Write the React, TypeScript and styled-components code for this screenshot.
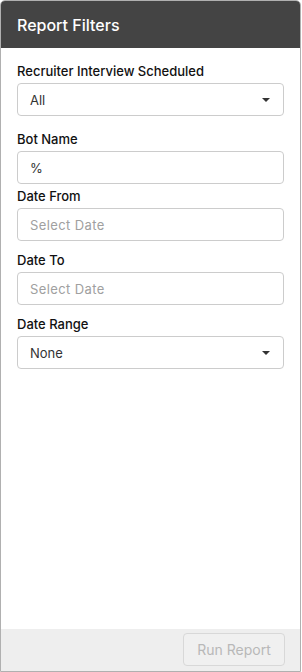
import styled, { createGlobalStyle } from 'styled-components';

const GlobalStyle = createGlobalStyle`
  html, body {
    margin: 0;
    padding: 0;
    background: #ffffff;
  }
  body {
    font-family: Inter, 'Open Sans', sans-serif;
  }
  * {
    box-sizing: border-box;
  }
`;

interface FieldProps {
  $top: number;
}

const Panel = styled.div`
  width: 301px;
  height: 672px;
  display: flex;
  flex-direction: column;
  border: 1px solid #b0b0b0;
  border-radius: 5px 5px 0 0;
  overflow: hidden;
  background: #fff;
`;

const Header = styled.div`
  height: 47px;
  background: #444444;
  color: #fff;
  display: flex;
  align-items: center;
  padding: 0 16px;
  font-size: 16px;
  font-weight: 500;
`;

const Body = styled.div`
  flex: 1;
  display: flex;
  flex-direction: column;
  padding: 0 16px;
`;

const Field = styled.div<FieldProps>`
  display: flex;
  flex-direction: column;
  gap: 3px;
  margin-top: ${p => p.$top}px;
`;

const Label = styled.label`
  font-size: 13px;
  line-height: 17px;
  font-weight: 500;
  color: #111;
`;

const Box = styled.div`
  height: 33px;
  border: 1px solid #cccccc;
  border-radius: 4px;
  display: flex;
  align-items: center;
  justify-content: space-between;
  padding: 0 12px 0 12px;
  font-size: 13px;
`;

const Value = styled.span<{ $muted?: boolean }>`
  color: ${p => (p.$muted ? '#a0a0a0' : '#333')};
  letter-spacing: ${p => (p.$muted ? '0.4px' : '0')};
`;

const Caret = styled.span`
  width: 0;
  height: 0;
  margin-right: 1px;
  border-left: 4px solid transparent;
  border-right: 4px solid transparent;
  border-top: 4px solid #333;
`;

const Footer = styled.div`
  height: 42px;
  background: #eeeeee;
  display: flex;
  align-items: center;
  justify-content: flex-end;
  padding: 0 15px 1px;
`;

const RunButton = styled.button`
  width: 102px;
  height: 33px;
  border: 1px solid #d8d8d8;
  border-radius: 4px;
  background: #f0f0f0;
  color: #b8b8b8;
  font-family: inherit;
  font-size: 14px;
  cursor: default;
`;

const Select = ({ value }: { value: string }) => (
  <Box>
    <Value>{value}</Value>
    <Caret />
  </Box>
);

const Input = ({ value, placeholder }: { value?: string; placeholder?: string }) => (
  <Box>
    <Value $muted={!value}>{value || placeholder}</Value>
  </Box>
);

const App = () => {
  return (
    <>
      <GlobalStyle />
      <Panel>
        <Header>Report Filters</Header>
        <Body>
          <Field $top={15}>
            <Label>Recruiter Interview Scheduled</Label>
            <Select value="All" />
          </Field>
          <Field $top={15}>
            <Label>Bot Name</Label>
            <Input value="%" />
          </Field>
          <Field $top={4}>
            <Label>Date From</Label>
            <Input placeholder="Select Date" />
          </Field>
          <Field $top={11}>
            <Label>Date To</Label>
            <Input placeholder="Select Date" />
          </Field>
          <Field $top={11}>
            <Label>Date Range</Label>
            <Select value="None" />
          </Field>
        </Body>
        <Footer>
          <RunButton disabled>Run Report</RunButton>
        </Footer>
      </Panel>
    </>
  );
};

export default App;
